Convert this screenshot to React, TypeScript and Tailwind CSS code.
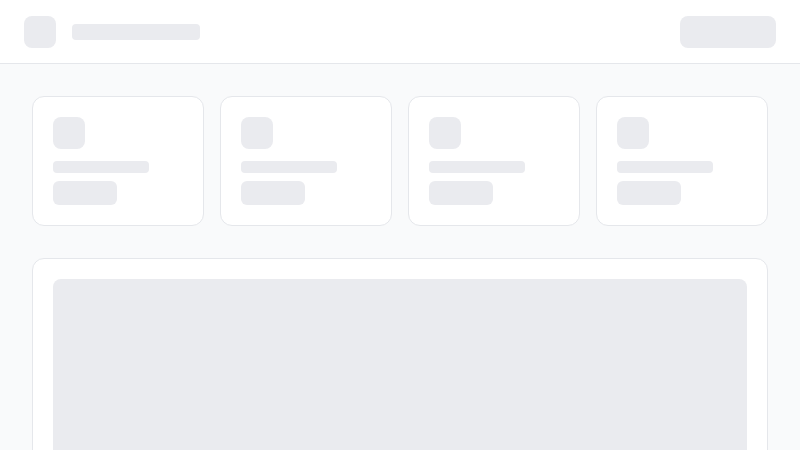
import React from 'react';

const StatCardSkeleton: React.FC = () => (
  <div className="rounded-xl border border-gray-200 bg-white p-5">
    <div className="w-8 h-8 rounded-lg bg-[#eaebef]"></div>
    <div className="mt-3 w-24 h-3 rounded bg-[#eaebef]"></div>
    <div className="mt-2 w-16 h-6 rounded-md bg-[#eaebef]"></div>
  </div>
);

const App: React.FC = () => {
  return (
    <div className="min-h-screen bg-gray-50 font-['Inter',sans-serif]">
      {/* Header */}
      <header className="h-16 bg-white border-b border-gray-200 px-6 flex items-center justify-between">
        <div className="flex items-center gap-4">
          <div className="w-8 h-8 rounded-lg bg-[#eaebef]"></div>
          <div className="w-32 h-4 rounded bg-[#eaebef]"></div>
        </div>
        <div className="w-24 h-8 rounded-lg bg-[#eaebef]"></div>
      </header>

      {/* Content */}
      <main className="p-8">
        <div className="grid grid-cols-4 gap-4">
          {Array.from({ length: 4 }).map((_, i) => (
            <StatCardSkeleton key={i} />
          ))}
        </div>

        <div className="mt-8 rounded-xl border border-gray-200 bg-white p-5">
          <div className="h-72 rounded-lg bg-[#eaebef]"></div>
        </div>
      </main>
    </div>
  );
};

export default App;
